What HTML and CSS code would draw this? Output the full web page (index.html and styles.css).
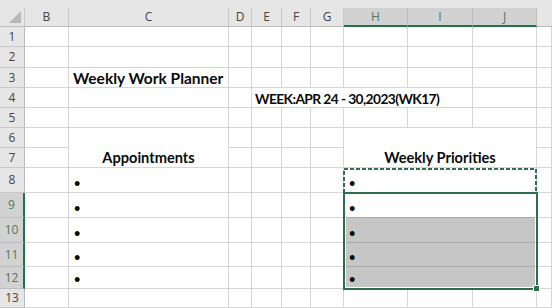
FILE: index.html
```html
<!DOCTYPE html>
<html>
<head>
<meta charset="utf-8">
<link rel="stylesheet" href="styles.css">
</head>
<body>
<div class="sheet">
  <div class="strip"></div>

  <div class="ch corner"><span class="tri"></span></div>
  <div class="ch">B</div>
  <div class="ch">C</div>
  <div class="ch">D</div>
  <div class="ch">E</div>
  <div class="ch">F</div>
  <div class="ch">G</div>
  <div class="ch chs">H</div>
  <div class="ch chs">I</div>
  <div class="ch chs">J</div>
  <div class="ch last"></div>

  <!-- row 1 -->
  <div class="rh">1</div><div class="c"></div><div class="c"></div><div class="c"></div><div class="c"></div><div class="c"></div><div class="c"></div><div class="c"></div><div class="c"></div><div class="c"></div><div class="c"></div>
  <!-- row 2 -->
  <div class="rh">2</div><div class="c"></div><div class="c"></div><div class="c"></div><div class="c"></div><div class="c"></div><div class="c"></div><div class="c"></div><div class="c"></div><div class="c"></div><div class="c"></div>
  <!-- row 3 -->
  <div class="rh">3</div><div class="c"></div><div class="c t title">Weekly Work Planner</div><div class="c"></div><div class="c"></div><div class="c"></div><div class="c"></div><div class="c"></div><div class="c"></div><div class="c"></div><div class="c"></div>
  <!-- row 4 -->
  <div class="rh">4</div><div class="c"></div><div class="c"></div><div class="c"></div><div class="c t week span5">WEEK:APR 24 - 30,2023(WK17)</div><div class="c"></div><div class="c"></div>
  <!-- row 5 -->
  <div class="rh">5</div><div class="c"></div><div class="c"></div><div class="c"></div><div class="c"></div><div class="c"></div><div class="c"></div><div class="c"></div><div class="c"></div><div class="c"></div><div class="c"></div>
  <!-- row 6 -->
  <div class="rh">6</div><div class="c"></div><div class="c t head rows2">Appointments</div><div class="c"></div><div class="c"></div><div class="c"></div><div class="c"></div><div class="c t head span3 rows2">Weekly Priorities</div><div class="c"></div>
  <!-- row 7 -->
  <div class="rh">7</div><div class="c"></div><div class="c"></div><div class="c"></div><div class="c"></div><div class="c"></div><div class="c"></div>
  <!-- row 8 -->
  <div class="rh">8</div><div class="c"></div><div class="c t bul">•</div><div class="c"></div><div class="c"></div><div class="c"></div><div class="c"></div><div class="c t bul span3">•</div><div class="c"></div>
  <!-- row 9 -->
  <div class="rh rhs">9</div><div class="c"></div><div class="c t bul">•</div><div class="c"></div><div class="c"></div><div class="c"></div><div class="c"></div><div class="c t bul span3 active">•</div><div class="c"></div>
  <!-- row 10 -->
  <div class="rh rhs">10</div><div class="c"></div><div class="c t bul">•</div><div class="c"></div><div class="c"></div><div class="c"></div><div class="c"></div><div class="c t bul span3 sel">•</div><div class="c"></div>
  <!-- row 11 -->
  <div class="rh rhs">11</div><div class="c"></div><div class="c t bul">•</div><div class="c"></div><div class="c"></div><div class="c"></div><div class="c"></div><div class="c t bul span3 sel">•</div><div class="c"></div>
  <!-- row 12 -->
  <div class="rh rhs">12</div><div class="c"></div><div class="c t bul">•</div><div class="c"></div><div class="c"></div><div class="c"></div><div class="c"></div><div class="c t bul span3 sel">•</div><div class="c"></div>
  <!-- row 13 -->
  <div class="rh">13</div><div class="c"></div><div class="c"></div><div class="c"></div><div class="c"></div><div class="c"></div><div class="c"></div><div class="c"></div><div class="c"></div><div class="c"></div><div class="c"></div>

  <svg class="marquee" width="194" height="26" viewBox="0 0 194 26">
    <rect x="1" y="1" width="192" height="24" fill="none" stroke="#2f6e4b" stroke-width="2" stroke-dasharray="4 2"></rect>
  </svg>
  <div class="selbox"></div>
  <div class="handle"></div>
</div>
</body>
</html>
```

FILE: styles.css
```css
html, body {
  margin: 0;
  padding: 0;
  background: #ffffff;
}

.sheet {
  position: relative;
  width: 552px;
  height: 308px;
  overflow: hidden;
  display: grid;
  grid-template-columns: 25px 44px 160px 23px 30px 29px 33px 64px 65px 64px 15px;
  grid-template-rows: 8px 19px 20px 21px 20px 20px 20px 20px 20px 25px 25px 25px 24px 22px 19px;
  font-family: Lato, "Open Sans", sans-serif;
}

.strip {
  grid-column: 1 / -1;
  background: #e6e6e6;
}

.ch {
  background: #e6e6e6;
  border-right: 1px solid #c8c8c8;
  border-bottom: 1px solid #bcbcbc;
  box-sizing: border-box;
  font-family: "Open Sans", sans-serif;
  font-size: 12px;
  color: #444444;
  display: flex;
  align-items: center;
  justify-content: center;
  line-height: 1;
}

.ch.last {
  border-right: none;
}

.ch.chs {
  background: #d2d2d2;
  color: #4d7a60;
  border-bottom: 2px solid #217346;
  border-right-color: #bdbdbd;
}

.corner {
  position: relative;
}

.tri {
  position: absolute;
  right: 3px;
  bottom: 3px;
  width: 0;
  height: 0;
  border-style: solid;
  border-width: 0 0 12px 12px;
  border-color: transparent transparent #b8b8b8 transparent;
}

.rh {
  background: #e6e6e6;
  border-right: 1px solid #bcbcbc;
  border-bottom: 1px solid #c8c8c8;
  box-sizing: border-box;
  font-family: "Open Sans", sans-serif;
  font-size: 12px;
  color: #444444;
  display: flex;
  align-items: center;
  justify-content: center;
  line-height: 1;
}

.rh.rhs {
  background: #d2d2d2;
  color: #4d7a60;
  border-right: 2px solid #217346;
  border-bottom-color: #bdbdbd;
}

.c {
  border-right: 1px solid #d6d6d6;
  border-bottom: 1px solid #d6d6d6;
  box-sizing: border-box;
  min-width: 0;
}

.t {
  font-weight: 700;
  font-size: 14.6px;
  color: #0a0a0a;
  white-space: nowrap;
  display: flex;
  align-items: flex-end;
  line-height: 1;
  padding-bottom: 1px;
}

.title {
  padding-left: 4px;
  font-size: 15.5px;
}

.week {
  padding-left: 3px;
  font-size: 13.8px;
  letter-spacing: -0.6px;
}

.head {
  justify-content: center;
}

.bul {
  padding-left: 5px;
  padding-bottom: 4px;
  font-size: 11px;
}

.span5 {
  grid-column: span 5;
}

.span3 {
  grid-column: span 3;
}

.rows2 {
  grid-row: span 2;
}

.sel {
  background: #c6c6c6;
  border-bottom-color: #a9a9a9;
}

.active {
  border-bottom-color: #a9a9a9;
}

.marquee {
  position: absolute;
  left: 343px;
  top: 168px;
}

.selbox {
  position: absolute;
  left: 343px;
  top: 192px;
  width: 195px;
  height: 98px;
  box-sizing: border-box;
  border: 2px solid #2f6e4b;
  box-shadow: inset 0 0 0 1px #ffffff;
}

.handle {
  position: absolute;
  left: 534px;
  top: 286px;
  width: 5px;
  height: 5px;
  background: #2f6e4b;
  outline: 1px solid #ffffff;
}
```
